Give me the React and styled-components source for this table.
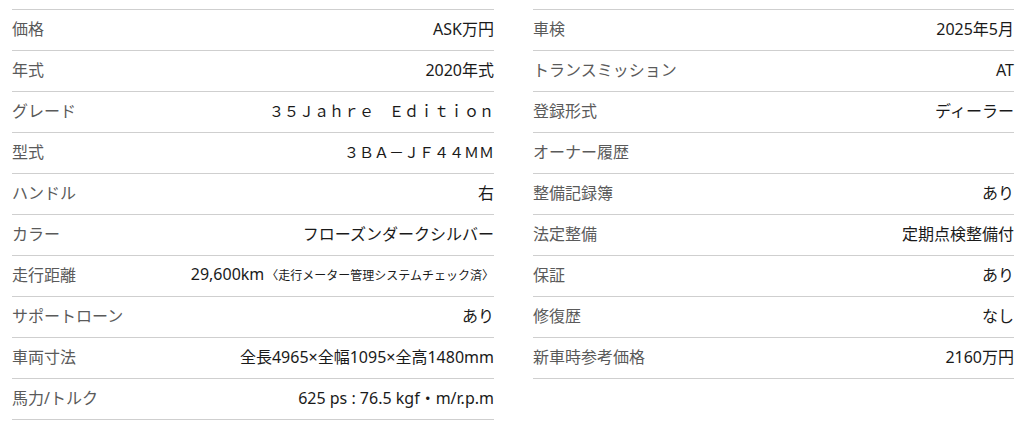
import styled, { createGlobalStyle } from "styled-components";

const GlobalStyle = createGlobalStyle`
  body {
    margin: 0;
    background: #fff;
    font-family: "Noto Sans", "Noto Sans CJK JP", sans-serif;
  }
`;

const left = [
  ["価格", "ASK万円"],
  ["年式", "2020年式"],
  ["グレード", "３５Ｊａｈｒｅ　Ｅｄｉｔｉｏｎ", null, true],
  ["型式", "３ＢＡ－ＪＦ４４ＭＭ", null, true],
  ["ハンドル", "右"],
  ["カラー", "フローズンダークシルバー"],
  ["走行距離", "29,600km", "〈走行メーター管理システムチェック済〉"],
  ["サポートローン", "あり"],
  ["車両寸法", "全長4965×全幅1095×全高1480mm"],
  ["馬力/トルク", "625 ps : 76.5 kgf・m/r.p.m"],
];

const right = [
  ["車検", "2025年5月"],
  ["トランスミッション", "AT"],
  ["登録形式", "ディーラー"],
  ["オーナー履歴", ""],
  ["整備記録簿", "あり"],
  ["法定整備", "定期点検整備付"],
  ["保証", "あり"],
  ["修復歴", "なし"],
  ["新車時参考価格", "2160万円"],
];

const SpecList = ({ items }) => (
  <List>
    {items.map(([label, value, note, fullwidth]) => (
      <Row key={label}>
        <Label>{label}</Label>
        <Value $fullwidth={fullwidth}>
          {value}
          {note && <Note>{note}</Note>}
        </Value>
      </Row>
    ))}
  </List>
);

export default function App() {
  return (
    <>
      <GlobalStyle />
      <Page>
        <SpecList items={left} />
        <SpecList items={right} />
      </Page>
    </>
  );
}

const Page = styled.div`
  display: grid;
  grid-template-columns: 482px 481px;
  column-gap: 39px;
  padding: 9px 12px 0 12px;
  align-items: start;
`;

const List = styled.dl`
  margin: 0;
  border-bottom: 1px solid #cfcfcf;
`;

const Row = styled.div`
  display: flex;
  align-items: center;
  justify-content: space-between;
  height: 41px;
  box-sizing: border-box;
  padding-bottom: 2px;
  border-top: 1px solid #cfcfcf;
  font-size: 16px;
  line-height: 20px;
`;

const Label = styled.dt`
  color: #5a5a5a;
`;

const Value = styled.dd`
  margin: 0;
  color: #1a1a1a;
  text-align: right;
  white-space: nowrap;
  font-size: ${(p) => (p.$fullwidth ? "15px" : "16px")};
`;

const Note = styled.span`
  font-size: 12px;
  margin-left: 2px;
`;
